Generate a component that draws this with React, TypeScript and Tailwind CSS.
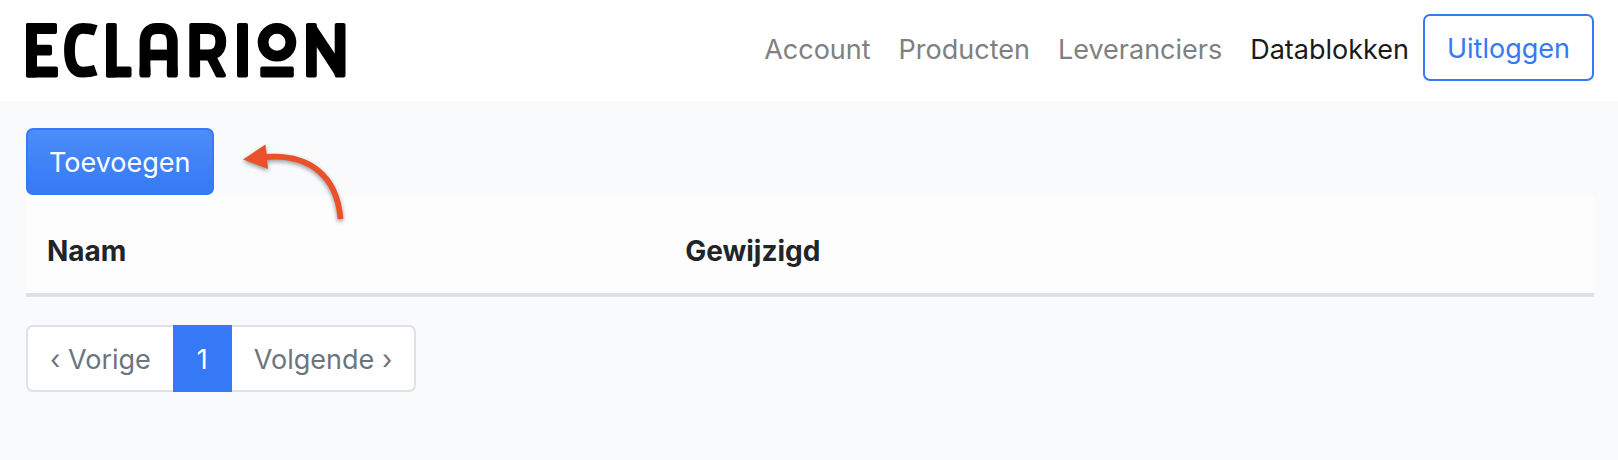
const navLinks = [
  { label: "Account", active: false },
  { label: "Producten", active: false },
  { label: "Leveranciers", active: false },
  { label: "Datablokken", active: true },
];

function Logo() {
  return (
    <svg
      width="320"
      height="56"
      viewBox="0 0 320 56"
      role="img"
      aria-label="Eclarion"
      fill="#000"
      stroke="none"
    >
      <rect x="0" y="1" width="11" height="54.5" rx="2" />
      <rect x="0" y="1" width="31" height="11" rx="2" />
      <rect x="0" y="22.700" width="26" height="10.800" rx="2" />
      <rect x="0" y="44.500" width="32" height="11" rx="2" />

      <g fill="none" stroke="#000" strokeWidth="10.8">
        <path d="M69.800 8.300C65.500 6.800 61 6.300 57 6.300C48 6.300 43.500 14 43.500 28.300C43.500 42.500 48 50.200 57 50.200C61 50.200 65.500 49.700 69.800 48.200" />
        <path d="M119 53V20Q119 6.500 131 6.500H134.500Q146.300 6.500 146.300 20V53" />
        <path d="M119 33H146" />
        <path d="M169 6.500H182Q194.800 7 194.800 19.500Q194.800 32.500 182 33H169" />
        <circle cx="251" cy="20.300" r="13.900" />
      </g>

      <rect x="80" y="1" width="10.800" height="54.500" rx="2" />
      <rect x="80" y="44.500" width="25.500" height="11" rx="2" />

      <rect x="113.600" y="44" width="10.800" height="11.500" rx="2" />
      <rect x="140.900" y="44" width="10.800" height="11.500" rx="2" />

      <rect x="163.300" y="1" width="10.800" height="54.500" rx="2" />
      <path
        d="M182.500 36L191.500 53.500H198L188.500 35Z"
        stroke="#000"
        strokeWidth="4"
        strokeLinejoin="round"
      />

      <rect x="211" y="1" width="11" height="54.500" rx="2" />
      <rect x="234.300" y="44.500" width="33.500" height="11" rx="2" />

      <rect x="280" y="1" width="10.800" height="54.500" rx="2" />
      <rect x="308.700" y="1" width="10.800" height="54.500" rx="2" />
      <path
        d="M282 3H288L310 36L317.500 48V53.500H311L282 9Z"
        stroke="#000"
        strokeWidth="3"
        strokeLinejoin="round"
      />
    </svg>
  );
}

function CurvedArrow() {
  return (
    <svg
      width="112"
      height="88"
      viewBox="0 0 112 88"
      aria-hidden="true"
      className="absolute left-[238px] top-[138px] drop-shadow-[0_2px_2px_rgba(0,0,0,0.4)]"
    >
      <path
        d="M28 19C72 16 99 38 102.500 81"
        fill="none"
        stroke="#ea512b"
        strokeWidth="5.8"
      />
      <path d="M5 21.500L27.500 6.500L30 31Z" fill="#ea512b" />
    </svg>
  );
}

export default function App() {
  return (
    <div className="relative min-h-screen bg-[#f8fafc] font-['Inter','Liberation_Sans',sans-serif] text-[27px] leading-[42px] text-[#212529]">
      <header className="flex items-start justify-between bg-white pb-5 pl-[26px] pr-6 pt-[14px]">
        <a href="#" className="pt-2">
          <Logo />
        </a>
        <nav className="flex items-center">
          {navLinks.map((link) => (
            <a
              key={link.label}
              href="#"
              className={
                link.active
                  ? "px-[14px] pt-1 text-[#1a1a1a]"
                  : "px-[14px] pt-1 text-[#808080]"
              }
            >
              {link.label}
            </a>
          ))}
          <button
            type="button"
            className="h-[67px] rounded-[7px] border-2 border-[#3579f6] px-[22px] pt-0.5 text-[#3579f6]"
          >
            Uitloggen
          </button>
        </nav>
      </header>

      <main className="pb-8 pl-[26px] pr-6 pt-[27px]">
        <button
          type="button"
          className="block h-[67px] rounded-[7px] border-2 border-[#3579f6] bg-linear-to-b from-[#4c8df8] to-[#3579f6] px-[21px] pt-0.5 text-white"
        >
          Toevoegen
        </button>

        <table className="w-full table-fixed border-collapse bg-[#fdfdfd] text-left text-[28px]">
          <thead>
            <tr className="h-[100px] border-b-4 border-[#dee2e6]">
              <th scope="col" className="w-[40.7%] px-[21px] pt-[14px] font-bold">
                Naam
              </th>
              <th scope="col" className="px-[21px] pt-[14px] font-bold">
                Gewijzigd
              </th>
            </tr>
          </thead>
        </table>

        <nav aria-label="Paginering" className="mt-7 flex">
          <a
            href="#"
            className="flex h-[67px] items-center rounded-l-[7px] border-2 border-r-0 border-[#dee2e6] bg-white px-[22px] pt-0.5 text-[#6c757d]"
          >
            ‹ Vorige
          </a>
          <a
            href="#"
            aria-current="page"
            className="flex h-[67px] items-center bg-[#3579f6] px-6 pt-0.5 text-white"
          >
            1
          </a>
          <a
            href="#"
            className="flex h-[67px] items-center rounded-r-[7px] border-2 border-l-0 border-[#dee2e6] bg-white px-[22px] pt-0.5 text-[#6c757d]"
          >
            Volgende ›
          </a>
        </nav>
      </main>

      <CurvedArrow />
    </div>
  );
}
